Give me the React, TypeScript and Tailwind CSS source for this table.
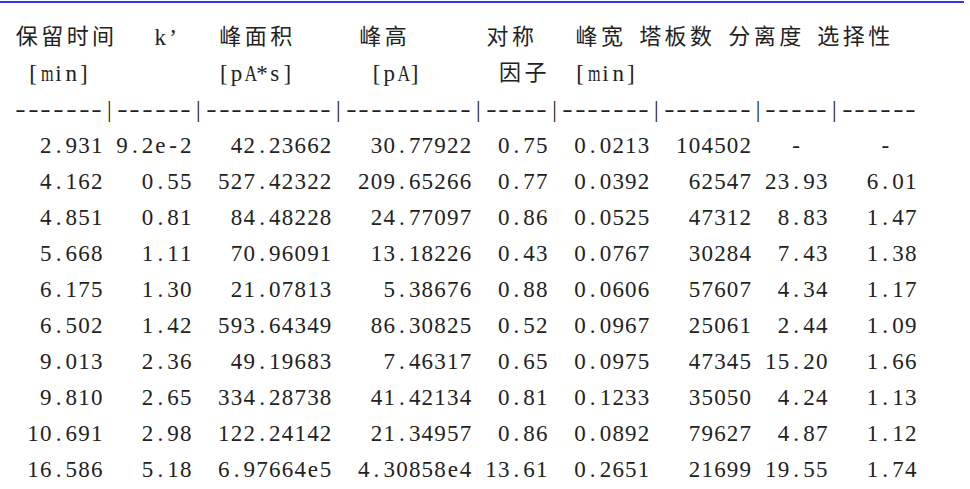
import React from "react";

const isWide = (ch: string) => ch.charCodeAt(0) >= 0x2e80;

function Line({ text, sep = false }: { text: string; sep?: boolean }) {
  const chars = Array.from(text);
  return (
    <div className="flex h-[36px] items-center whitespace-pre">
      {chars.map((ch, i) =>
        isWide(ch) ? (
          <span key={i} className="inline-block w-[25.46px] shrink-0 text-center text-[22px]">
            {ch}
          </span>
        ) : sep && ch === "-" ? (
          <span key={i} className="inline-block w-[12.73px] shrink-0 text-center scale-x-[1.35]">
            {ch}
          </span>
        ) : ch === "m" ? (
          <span key={i} className="inline-block w-[12.73px] shrink-0 text-center scale-x-[0.7]">
            {ch}
          </span>
        ) : ch === "A" ? (
          <span key={i} className="inline-block w-[12.73px] shrink-0 text-center scale-x-[0.76]">
            {ch}
          </span>
        ) : (
          <span key={i} className="inline-block w-[12.73px] shrink-0 text-center">
            {ch}
          </span>
        )
      )}
    </div>
  );
}

const rows: string[][] = [
  ["2.931", "9.2e-2", "42.23662", "30.77922", "0.75", "0.0213", "104502", "-", "-"],
  ["4.162", "0.55", "527.42322", "209.65266", "0.77", "0.0392", "62547", "23.93", "6.01"],
  ["4.851", "0.81", "84.48228", "24.77097", "0.86", "0.0525", "47312", "8.83", "1.47"],
  ["5.668", "1.11", "70.96091", "13.18226", "0.43", "0.0767", "30284", "7.43", "1.38"],
  ["6.175", "1.30", "21.07813", "5.38676", "0.88", "0.0606", "57607", "4.34", "1.17"],
  ["6.502", "1.42", "593.64349", "86.30825", "0.52", "0.0967", "25061", "2.44", "1.09"],
  ["9.013", "2.36", "49.19683", "7.46317", "0.65", "0.0975", "47345", "15.20", "1.66"],
  ["9.810", "2.65", "334.28738", "41.42134", "0.81", "0.1233", "35050", "4.24", "1.13"],
  ["10.691", "2.98", "122.24142", "21.34957", "0.86", "0.0892", "79627", "4.87", "1.12"],
  ["16.586", "5.18", "6.97664e5", "4.30858e4", "13.61", "0.2651", "21699", "19.55", "1.74"],
];

const widths = [7, 7, 11, 11, 6, 8, 8, 6, 7];

function rowText(r: string[]) {
  return r
    .map((v, i) => {
      if (v === "-") {
        return i === 7 ? "   -  " : "    -  ";
      }
      return v.padStart(widths[i], " ");
    })
    .join("");
}

const header1 = "保留时间   k’   峰面积     峰高      对称   峰宽 塔板数 分离度 选择性";
const header2 = " [min]          [pA*s]      [pA]      因子  [min]";
const separator = "-------|------|----------|----------|-----|-------|-------|-----|------";

export default function App() {
  return (
    <div className="w-[970px] h-[489px] bg-white overflow-hidden">
      <div className="mt-[1px] h-[2px] w-[964px] bg-[#3434f4]" />
      <div className="pt-[16px] pl-[14px] font-['Liberation_Serif','Noto_Sans_CJK_SC',serif] text-[23px] leading-none text-[#222222]">
        <Line text={header1} />
        <Line text={header2} />
        <Line text={separator} sep />
        {rows.map((r, i) => (
          <Line key={i} text={rowText(r)} />
        ))}
      </div>
    </div>
  );
}
